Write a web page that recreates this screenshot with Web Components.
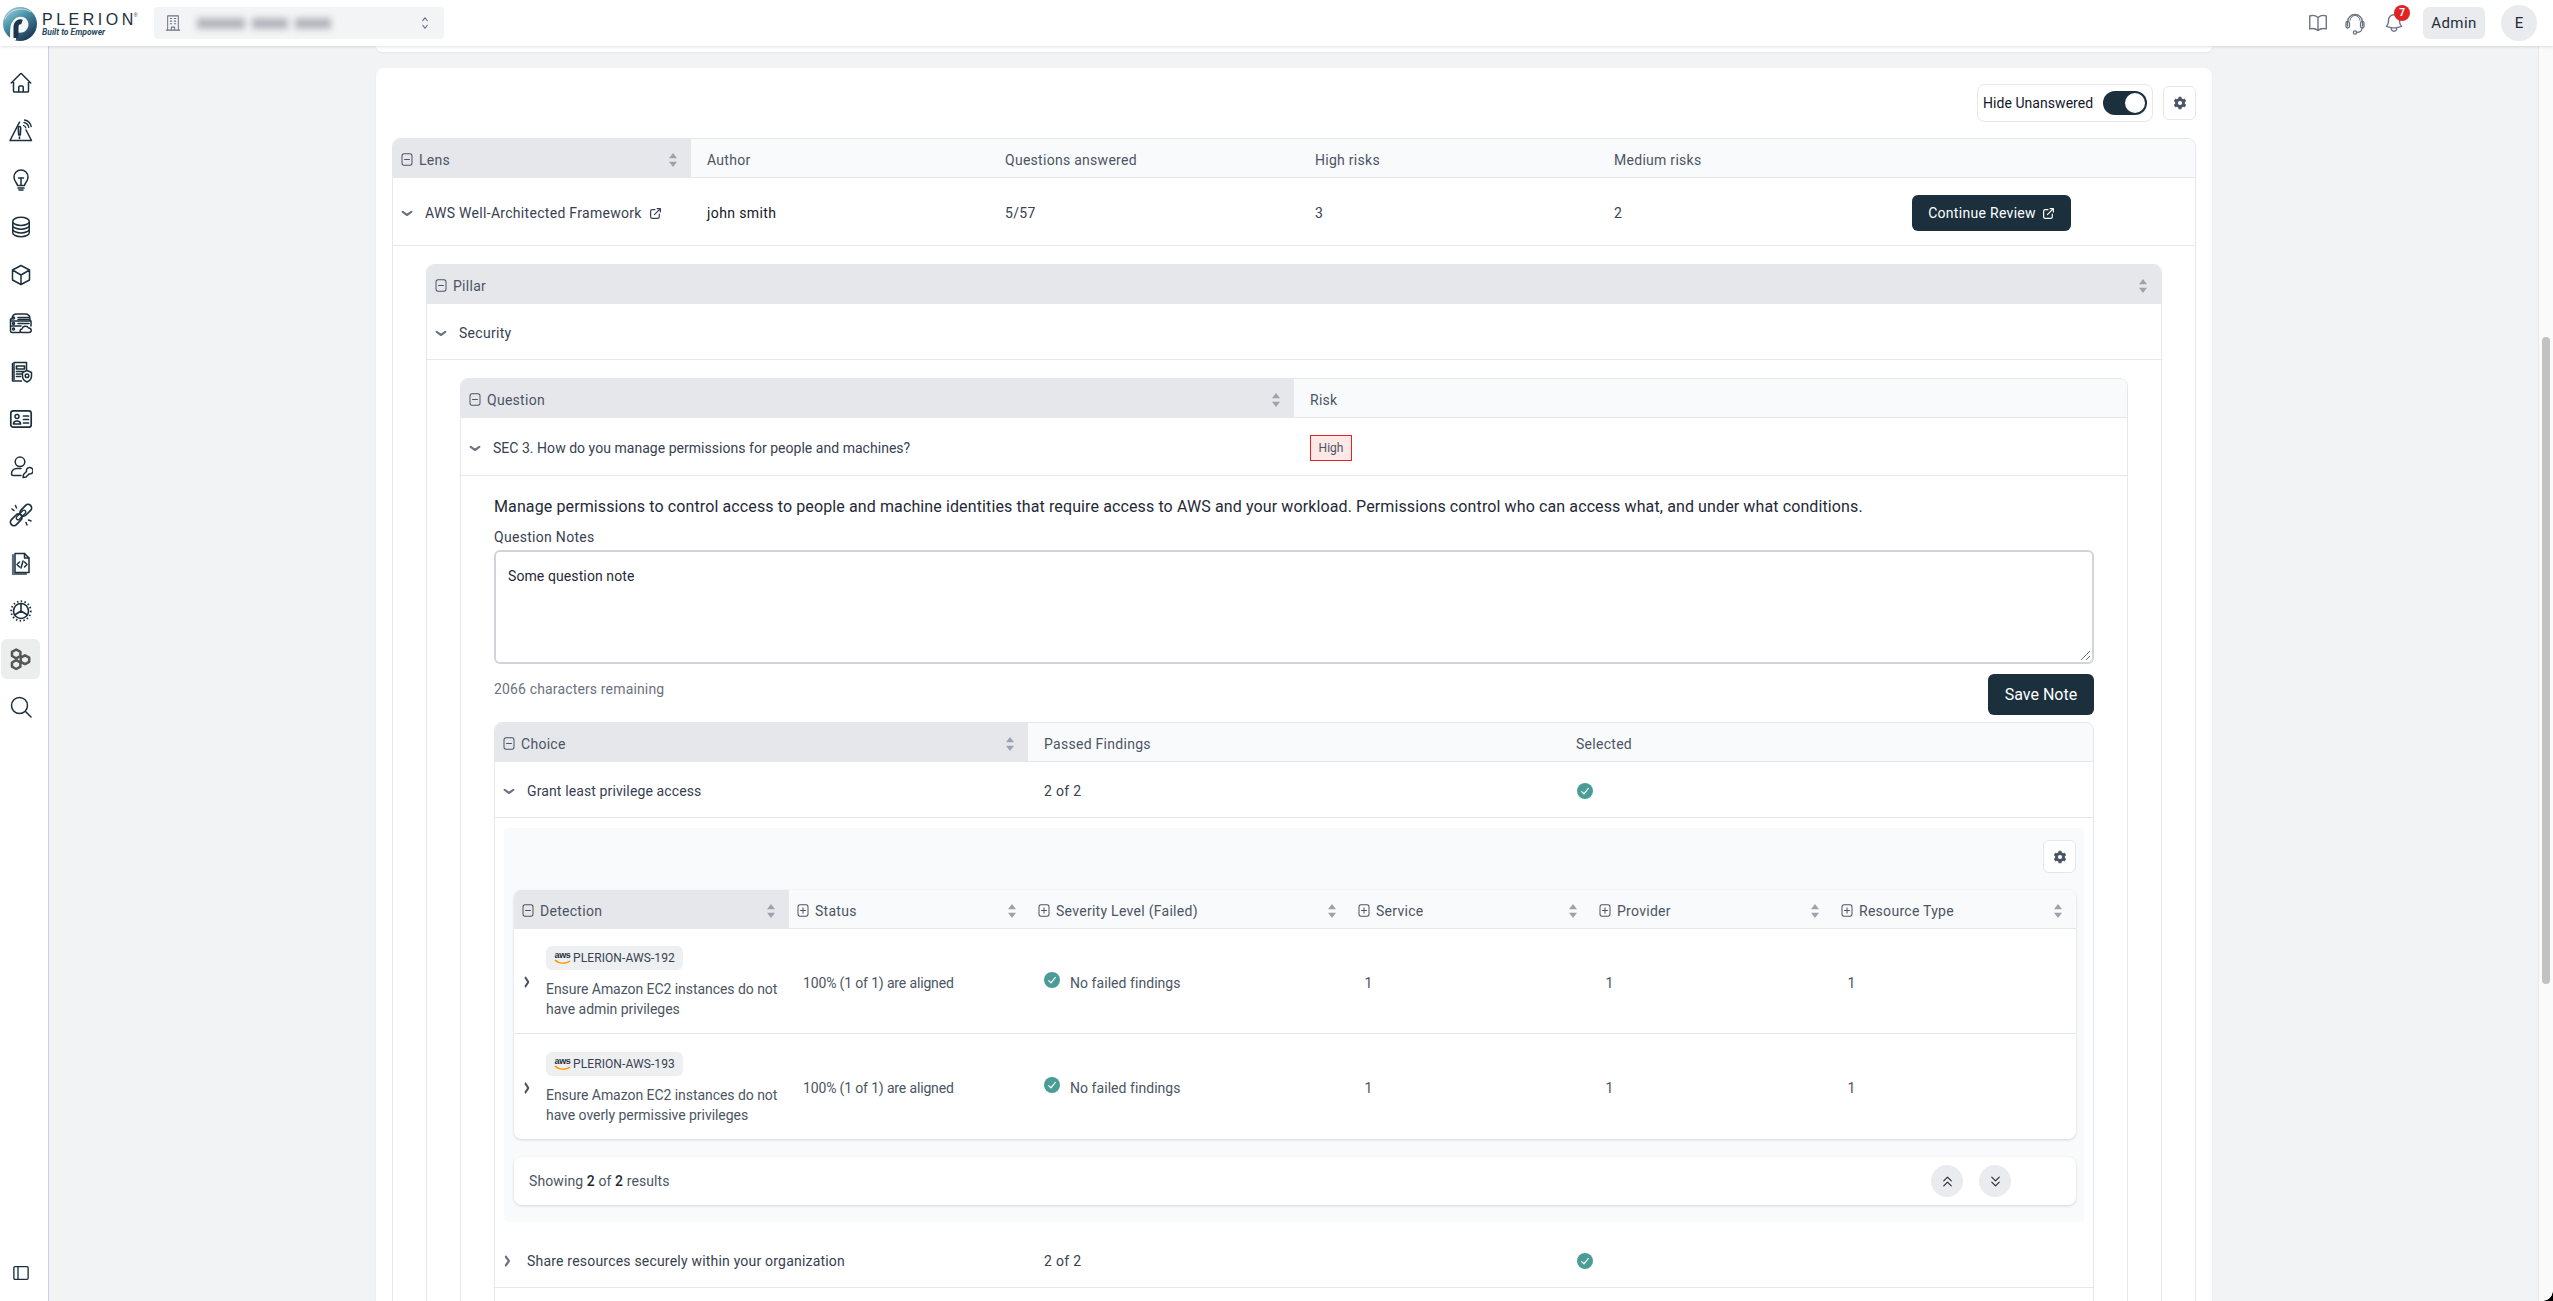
<!DOCTYPE html>
<html>
<head>
<meta charset="utf-8">
<title>Plerion</title>
<style>
  html, body { margin: 0; height: 100%; overflow: hidden; }
  body { font-family: "Roboto", "Liberation Sans", sans-serif; font-size: 14px; color: #374151; }
</style>
</head>
<body>
<app-shell>
  <top-bar slot="header"></top-bar>
  <side-nav slot="nav"></side-nav>

  <page-stub></page-stub>
  <page-card>
    <card-toolbar></card-toolbar>

    <data-table>
      <table-head cols="298px 298px 310px 299px 298px 1fr">
        <head-cell label="Lens" mode="minus" active sort></head-cell>
        <head-cell label="Author"></head-cell>
        <head-cell label="Questions answered"></head-cell>
        <head-cell label="High risks"></head-cell>
        <head-cell label="Medium risks"></head-cell>
        <head-cell></head-cell>
      </table-head>
      <table-row cols="298px 298px 310px 299px 298px 1fr">
        <row-cell chevron="down"><span>AWS Well-Architected Framework</span><ui-icon name="external" size="13" stroke="2.2" style="margin-left:7px"></ui-icon></row-cell>
        <row-cell style="--ls:.4px"><span style="color:#111827">john smith</span></row-cell>
        <row-cell>5/57</row-cell>
        <row-cell>3</row-cell>
        <row-cell>2</row-cell>
        <row-cell><dark-button>Continue Review <ui-icon name="external" size="13" stroke="2.2" style="margin-left:6px"></ui-icon></dark-button></row-cell>
      </table-row>

      <table-detail>
        <data-table>
          <table-head cols="1fr">
            <head-cell label="Pillar" mode="minus" active sort></head-cell>
          </table-head>
          <table-row cols="1fr">
            <row-cell chevron="down">Security</row-cell>
          </table-row>

          <table-detail>
            <data-table>
              <table-head cols="833px 1fr">
                <head-cell label="Question" mode="minus" active sort></head-cell>
                <head-cell label="Risk"></head-cell>
              </table-head>
              <table-row cols="833px 1fr">
                <row-cell chevron="down" style="--ls:.03px">SEC 3. How do you manage permissions for people and machines?</row-cell>
                <row-cell><risk-badge>High</risk-badge></row-cell>
              </table-row>

              <question-body>
                <span slot="intro">Manage permissions to control access to people and machine identities that require access to AWS and your workload. Permissions control who can access what, and under what conditions.</span>
                <span slot="note">Some question note</span>

                <data-table>
                  <table-head cols="533px 532px 1fr">
                    <head-cell label="Choice" mode="minus" active sort></head-cell>
                    <head-cell label="Passed Findings"></head-cell>
                    <head-cell label="Selected"></head-cell>
                  </table-head>
                  <table-row cols="533px 532px 1fr">
                    <row-cell chevron="down" style="--ls:.12px">Grant least privilege access</row-cell>
                    <row-cell>2 of 2</row-cell>
                    <row-cell><ui-icon name="check" size="16" style="color:#4a9d96;margin-left:1px"></ui-icon></row-cell>
                  </table-row>

                  <findings-panel>
                    <data-table raised>
                      <table-head cols="275px 241px 320px 241px 242px 1fr">
                        <head-cell label="Detection" mode="minus" active sort></head-cell>
                        <head-cell label="Status" mode="plus" sort></head-cell>
                        <head-cell label="Severity Level (Failed)" mode="plus" sort></head-cell>
                        <head-cell label="Service" mode="plus" sort></head-cell>
                        <head-cell label="Provider" mode="plus" sort></head-cell>
                        <head-cell label="Resource Type" mode="plus" sort></head-cell>
                      </table-head>
                      <detection-row code="PLERION-AWS-192" text="Ensure Amazon EC2 instances do not have admin privileges"></detection-row>
                      <detection-row code="PLERION-AWS-193" text="Ensure Amazon EC2 instances do not have overly permissive privileges" last></detection-row>
                    </data-table>
                    <results-bar slot="footer"></results-bar>
                  </findings-panel>

                  <table-row cols="533px 532px 1fr">
                    <row-cell chevron="right" style="--ls:.2px">Share resources securely within your organization</row-cell>
                    <row-cell>2 of 2</row-cell>
                    <row-cell><ui-icon name="check" size="16" style="color:#4a9d96;margin-left:1px"></ui-icon></row-cell>
                  </table-row>
                  <table-row cols="1fr"><row-cell></row-cell></table-row>
                </data-table>
              </question-body>
            </data-table>
          </table-detail>
        </data-table>
      </table-detail>
    </data-table>
  </page-card>
</app-shell>

<script>
const iconPaths = {
  home: `<path d="M2.25 12l8.954-8.955c.44-.439 1.152-.439 1.591 0L21.75 12M4.5 9.75v10.125c0 .621.504 1.125 1.125 1.125H9.75v-4.875c0-.621.504-1.125 1.125-1.125h2.25c.621 0 1.125.504 1.125 1.125V21h4.125c.621 0 1.125-.504 1.125-1.125V9.75M8.25 21h8.25"/>`,
  alert: `<path d="M10.5 3.2 1 21.5h21.5L17 11"/><path d="M10.5 7.5c1 0 1.2.8 1.2 1.5l-.4 7h-1.6l-.4-7c0-.7.2-1.500 1.200-1.500zM10.500 18v1.500" stroke-width="1.600"/><path d="M14.500 6.500c1 .3 2 1.200 2.300 2.300M15 3.500c2.500.5 4.200 2.200 4.800 4.800M15.500 1c3.200.6 6 3.300 6.700 6.600" stroke-width="1.300"/>`,
  bulb: `<path d="M8.500 18.500c0-2.500-3.500-3.700-3.500-8.500a7 7 0 0 1 14 0c0 4.800-3.500 6-3.500 8.500z"/><path d="M9 21h6M10 23h4M9.500 11h5M12 11v7"/>`,
  db: `<path d="M20.250 6.375c0 2.278-3.694 4.125-8.250 4.125S3.750 8.653 3.750 6.375m16.500 0c0-2.278-3.694-4.125-8.250-4.125S3.750 4.097 3.750 6.375m16.500 0v11.250c0 2.278-3.694 4.125-8.250 4.125s-8.250-1.847-8.250-4.125V6.375m16.500 0v3.750m-16.500-3.750v3.750m16.500 0v3.750C20.250 16.153 16.556 18 12 18s-8.250-1.847-8.250-4.125v-3.750m16.500 0c0 2.278-3.694 4.125-8.250 4.125s-8.250-1.847-8.250-4.125"/>`,
  cube: `<path d="M12 2.500 20.500 7v10L12 21.500 3.500 17V7zM3.500 7 12 12l8.500-5M12 12v9.500"/>`,
  server: `<path d="M3 8c0-4 2-5 5-5h8c3 0 5 1 5 5v2H1.500V8zM1.500 10H22v5M1.500 10v5H12M1.500 15v5c0 .8.500 1.500 1.500 1.500h8"/><circle cx="4.500" cy="12.500" r="1"/><circle cx="4.500" cy="18" r="1"/><circle cx="4.500" cy="7" r="1"/><path d="M9 6.500h11M9 8.500h11M9 12.500h11"/><path d="M13 21.500c-2.500 0-2.500-3.500 0-3.500 .5-3 5-4 6.500-1 3-.3 4 4.500.5 4.500z" fill="#fff"/>`,
  docshield: `<path d="M5 20.500V3.500h12.500v7"/><path d="M3.500 4.500v17.500h9"/><path d="M7.500 7h8v3h-8zM7.500 12.500h7M7.500 15h5M7.500 17.500h4" stroke-width="1.700"/><path d="M18 11.500l4.500 2v3.500c0 3-2 5-4.500 6-2.500-1-4.500-3-4.500-6v-3.500z" fill="#fff"/><circle cx="18" cy="16.800" r="1.800"/>`,
  idcard: `<rect x="1.800" y="3.800" width="20.400" height="16.400" rx="2.500" stroke-width="1.700"/><circle cx="8" cy="9.500" r="2"/><path d="M4.500 17c0-4 7-4 7 0zM14.500 9h5M14.500 12.500h5M14.500 16h5" stroke-width="1.700"/>`,
  userkey: `<circle cx="11" cy="6.800" r="4.800"/><path d="M12 13.500H8c-3.500 0-5.500 2.500-5.500 5.500 0 1 .5 1.500 1.500 1.500h8"/><path d="M14 22.500l.5-3 3-3a3.300 3.300 0 1 1 2.500 2.500l-3 3z" fill="#fff"/>`,
  chain: `<g transform="rotate(45 12 12)"><rect x="8.500" y="-1.500" width="7" height="13.500" rx="3.500" stroke-width="1.700"/><rect x="8.500" y="12" width="7" height="13.500" rx="3.500" stroke-width="1.700"/><rect x="10.200" y="6" width="3.600" height="12" rx="1.800" stroke-width="1.300"/></g><path d="M3 6 5 7.500M6.500 2.500 7.500 5M18 22l-1-2.500M22 18l-2.500-1" stroke-dasharray="1 1"/>`,
  code: `<path d="M20 7v14.500H6V2.500h9.500z" stroke-dasharray="none"/><path d="M4 4v19h13" stroke-width="2.200" opacity=".7"/><path d="M15.500 2.500V7H20"/><path d="M10.500 11 8 13.500l2.500 2.500M15.500 11 18 13.500 15.500 16M14 10l-2 7"/>`,
  wheel: `<circle cx="12" cy="12" r="7.500" stroke-width="1.600"/><path d="M12 12V4.500M12 12l-6.500 4M12 12l6.500 4" stroke-width="1.600"/><circle cx="12" cy="12" r="9.800" stroke-width="1.800" stroke-dasharray="1.500 2.300" stroke-linecap="butt"/>`,
  hexes: `<path d="M8.700 2 12.900 4.300V8.500L8.700 10.800 4.500 8.500V4.300z M17.500 7.800l4.200 2.300v4.200l-4.200 2.300-4.200-2.300v-4.200z M8.700 12.700l4.200 2.300v4.200l-4.200 2.300-4.200-2.300V15z" transform="translate(-1.500 .5)" stroke-width="2.500" stroke="#555"/>`,
  search: `<circle cx="10.500" cy="10.500" r="8"/><path d="M16.500 16.500 22 22"/>`,
  panel: `<rect x="2.500" y="3.500" width="19" height="17" rx="1.500" stroke-width="1.800"/><path d="M8 3.500v17" stroke-width="1.800"/>`,
  book: `<path d="M12 6.042A8.967 8.967 0 006 3.750c-1.052 0-2.062.18-3 .512v14.250A8.987 8.987 0 016 18c2.305 0 4.408.867 6 2.292m0-14.250a8.966 8.966 0 016-2.292c1.052 0 2.062.18 3 .512v14.250A8.987 8.987 0 0018 18a8.967 8.967 0 00-6 2.292m0-14.250v14.250"/>`,
  headset: `<path d="M4.500 15V11a7.500 7.500 0 0 1 15 0v4"/><path d="M7 9.500a5 5 0 0 1 10 0" stroke-width="1"/><rect x="3" y="10.500" width="3.500" height="6.500" rx="1.700"/><rect x="17.500" y="10.500" width="3.500" height="6.500" rx="1.700"/><path d="M19 17c0 3-2.500 4.500-5.500 4.500"/><circle cx="12" cy="21.500" r="1.600"/>`,
  bell: `<path d="M14.857 17.082a23.848 23.848 0 005.454-1.310A8.967 8.967 0 0118 9.750v-.7V9A6 6 0 006 9v.750a8.967 8.967 0 01-2.312 6.022c1.733.64 3.560 1.085 5.455 1.310m5.714 0a24.255 24.255 0 01-5.714 0m5.714 0a3 3 0 11-5.714 0"/>`,
  building: `<path d="M4 21.500V2.500h16v19M2 21.500h20M9.500 21.500v-4h5v4M8 6h2M14 6h2M8 9.500h2M14 9.500h2M8 13h2M14 13h2"/>`,
  updown: `<path d="M8 9l4-4 4 4M8 15l4 4 4-4"/>`,
  external: `<path d="M11 5H6a3 3 0 0 0-3 3v10a3 3 0 0 0 3 3h10a3 3 0 0 0 3-3v-5M10 14 21 3m0 0h-6M21 3v6"/>`,
  down: `<path d="M3.500 7.500 12 16l8.500-8.500"/>`,
  right: `<path d="M7.500 3.500 16 12l-8.500 8.500"/>`,
  minus: `<rect x="2" y="1.500" width="20" height="21" rx="4"/><path d="M7 12h10"/>`,
  plus: `<rect x="2" y="1.500" width="20" height="21" rx="4"/><path d="M7 12h10M12 7v10"/>`,
  chevsup: `<path d="M6 11l6-6 6 6M6 19l6-6 6 6"/>`,
  chevsdown: `<path d="M6 5l6 6 6-6M6 13l6 6 6-6"/>`
};
const filledIcons = {
  gear: `<path fill="currentColor" fill-rule="evenodd" clip-rule="evenodd" d="M7.84 1.804A1 1 0 018.82 1h2.36a1 1 0 01.98.804l.331 1.652a6.993 6.993 0 011.929 1.115l1.598-.54a1 1 0 011.186.447l1.18 2.044a1 1 0 01-.205 1.251l-1.267 1.113a7.047 7.047 0 010 2.228l1.267 1.113a1 1 0 01.206 1.25l-1.18 2.045a1 1 0 01-1.187.447l-1.598-.54a6.993 6.993 0 01-1.929 1.115l-.33 1.652a1 1 0 01-.98.804H8.82a1 1 0 01-.98-.804l-.331-1.652a6.993 6.993 0 01-1.929-1.115l-1.598.54a1 1 0 01-1.186-.447l-1.18-2.044a1 1 0 01.205-1.251l1.267-1.114a7.05 7.05 0 010-2.227L1.821 7.773a1 1 0 01-.206-1.250l1.180-2.045a1 1 0 011.187-.447l1.598.54A6.993 6.993 0 017.510 3.456l.33-1.652zM10 13a3 3 0 100-6 3 3 0 000 6z"/>`,
  check: `<circle cx="10" cy="10" r="10" fill="currentColor"/><path d="M5.500 10.500 8.700 13.500 14.500 6.500" fill="none" stroke="#fff" stroke-width="1.500"/>`,
  sort: `<path fill="currentColor" d="M4 0 8 6H0zM4 16 0 10h8z"/>`
};

class uiIcon extends HTMLElement {
  constructor() {
    super();
    this.attachShadow({ mode: "open" });
  }
  connectedCallback() {
    const name = this.getAttribute("name");
    const size = this.getAttribute("size") || 24;
    const h = this.getAttribute("height") || size;
    const body = filledIcons[name]
      ? `<svg width="${size}" height="${h}" viewBox="0 0 ${name === "sort" ? "8 16" : "20 20"}" preserveAspectRatio="none">${filledIcons[name]}</svg>`
      : `<svg width="${size}" height="${h}" viewBox="0 0 24 24" fill="none" stroke="currentColor" stroke-width="${this.getAttribute("stroke") || 1.5}" stroke-linecap="round" stroke-linejoin="round" preserveAspectRatio="none">${iconPaths[name]}</svg>`;
    this.shadowRoot.innerHTML = `<style>:host{display:inline-flex;flex:none;line-height:0}</style>${body}`;
  }
}
customElements.define("ui-icon", uiIcon);

class appShell extends HTMLElement {
  constructor() {
    super();
    this.attachShadow({ mode: "open" }).innerHTML = `
      <style>
        :host{display:grid;grid-template-columns:49px 1fr 15px;grid-template-rows:46px 1fr;height:1301px;width:2553px;background:#f2f3f5;overflow:hidden;position:relative}
        .head{grid-column:1 / 4;z-index:2}
        .main{padding:0 326px 0 327px;overflow:hidden}
        .track{background:#fafafa;border-left:1px solid #e8e8e8;padding:291px 3px 0 3px}
        .thumb{height:647px;border-radius:4px;background:#c2c2c2}
        .corner{position:absolute;right:0;bottom:0;width:10px;height:10px;background:radial-gradient(circle at 0 0,transparent 9.500px,#000 10px)}
      </style>
      <div class="head"><slot name="header"></slot></div>
      <slot name="nav"></slot>
      <div class="main"><slot></slot></div>
      <div class="track"><div class="thumb"></div></div>
      <div class="corner"></div>`;
  }
}
customElements.define("app-shell", appShell);

class topBar extends HTMLElement {
  constructor() {
    super();
    this.attachShadow({ mode: "open" }).innerHTML = `
      <style>
        :host{display:flex;align-items:center;height:46px;background:#fff;box-shadow:0 1px 3px rgba(0,0,0,.12);padding:0 16px 0 3px;box-sizing:border-box}
        .logo{display:flex;align-items:center;width:151px;flex:none;padding-top:2px}
        .brand{display:flex;flex-direction:column;margin-left:5px;color:#1b2f3d}
        .name{font:400 16px/15px "Liberation Sans",sans-serif;letter-spacing:3.500px;white-space:nowrap}
        .name sup{font-size:5px;letter-spacing:0;vertical-align:8px;line-height:0;margin-left:-3px}
        .tag{font:italic 700 8.500px/9px "Roboto",sans-serif;margin-top:1px;color:#2a4a5e}
        .org{display:flex;align-items:center;width:290px;height:32px;background:#f3f4f6;border-radius:4px;padding:0 12px 0 11px;box-sizing:border-box;color:#6b7280}
        .blur{display:flex;gap:7px;margin-left:16px;flex:1;filter:blur(3px)}
        .blur i{display:block;height:11px;background:#b4b6bc}
        .right{margin-left:auto;display:flex;align-items:center;color:#6b7280}
        .bell{position:relative;display:flex;margin-left:16px}
        .badge{position:absolute;left:11px;top:-7px;width:16px;height:16px;border-radius:50%;background:#e02424;color:#fff;font:700 10px/16px "Roboto",sans-serif;text-align:center}
        .admin{margin-left:18px;width:62px;height:32px;border-radius:6px;background:#e9ebee;color:#1f2f3d;font-size:15px;letter-spacing:.4px;line-height:32px;text-align:center}
        .avatar{margin-left:16px;width:36px;height:36px;border-radius:50%;background:#e9ebee;color:#1f2937;font-size:15px;line-height:36px;text-align:center}
      </style>
      <div class="logo">
        <svg width="34" height="34" viewBox="0 0 34 34">
          <defs><linearGradient id="g" x1="0" y1="0" x2=".7" y2="1"><stop offset="0" stop-color="#b5dbe2"/><stop offset=".45" stop-color="#4a93aa"/><stop offset="1" stop-color="#1c3550"/></linearGradient></defs>
          <circle cx="17" cy="17" r="17" fill="url(#g)"/>
          <path d="M7 33C7 22 7 18 10 14c3-5 11-6 14-1 3 4 1 10-3 12-3 1-6 1-8 0v8z" fill="#fff" opacity=".95"/>
          <path d="M13 31V20c0-4 3-6 6-5" fill="none" stroke="#1c3550" stroke-width="5"/>
          <path d="M2 12C6 3 18-1 28 5" fill="none" stroke="#e8f4f6" stroke-width="1" opacity=".7"/>
        </svg>
        <div class="brand">
          <span class="name">PLERION<sup>®</sup></span>
          <span class="tag">Built to Empower</span>
        </div>
      </div>
      <div class="org">
        <ui-icon name="building" size="16" height="18"></ui-icon>
        <div class="blur"><i style="width:48px"></i><i style="width:36px"></i><i style="width:36px"></i></div>
        <ui-icon name="updown" size="14" height="18" style="color:#6b7280"></ui-icon>
      </div>
      <div class="right">
        <ui-icon name="book" size="22"></ui-icon>
        <ui-icon name="headset" size="24" stroke="1.3" style="margin-left:14px"></ui-icon>
        <div class="bell"><ui-icon name="bell" size="22"></ui-icon><span class="badge">7</span></div>
        <div class="admin">Admin</div>
        <div class="avatar">E</div>
      </div>`;
  }
}
customElements.define("top-bar", topBar);

class sideNav extends HTMLElement {
  constructor() {
    super();
    const items = ["home", "alert", "bulb", "db", "cube", "server", "docshield", "idcard", "userkey", "chain", "code", "wheel", "hexes", "search"];
    this.attachShadow({ mode: "open" }).innerHTML = `
      <style>
        :host{display:flex;flex-direction:column;background:#fff;border-right:1px solid #cbd0dc;padding-top:17px;box-sizing:border-box;color:#1b2f3d;width:49px}
        .item{height:40px;width:39px;margin:0 0 8px 1px;border-radius:6px;display:flex;align-items:center;justify-content:center}
        .item.on{background:#eceded}
        .foot{margin-top:auto;padding:0 0 19px 12px;line-height:0}
      </style>
      ${items.map(n => `<div class="item ${n === "hexes" ? "on" : ""}"><ui-icon name="${n}" size="24"></ui-icon></div>`).join("")}
      <div class="foot"><ui-icon name="panel" size="18"></ui-icon></div>`;
  }
}
customElements.define("side-nav", sideNav);

class pageStub extends HTMLElement {
  constructor() {
    super();
    this.attachShadow({ mode: "open" }).innerHTML = `<style>:host{display:block;height:6px;margin-bottom:16px;background:#fff;border-radius:0 0 8px 8px;box-shadow:0 1px 2px rgba(0,0,0,.05)}</style>`;
  }
}
customElements.define("page-stub", pageStub);

class pageCard extends HTMLElement {
  constructor() {
    super();
    this.attachShadow({ mode: "open" }).innerHTML = `<style>:host{display:block;background:#fff;border-radius:8px 8px 0 0;padding:16px 16px 0;height:1400px;box-sizing:border-box;box-shadow:0 1px 2px rgba(0,0,0,.05)}</style><slot></slot>`;
  }
}
customElements.define("page-card", pageCard);

class cardToolbar extends HTMLElement {
  constructor() {
    super();
    this.attachShadow({ mode: "open" }).innerHTML = `
      <style>
        :host{display:flex;justify-content:flex-end;align-items:center;gap:10px;height:38px;margin-bottom:16px}
        .toggle{display:flex;align-items:center;justify-content:space-between;width:176px;height:38px;box-sizing:border-box;border:1px solid #e5e7eb;border-radius:8px;padding:0 5px;color:#111827;font-size:14px;letter-spacing:.05px}
        .switch{width:44px;height:24px;border-radius:12px;background:#1b2f3d;position:relative}
        .switch::after{content:"";position:absolute;right:2px;top:2px;width:20px;height:20px;border-radius:50%;background:#fff}
        .gear{width:33px;height:34px;box-sizing:border-box;border:1px solid #e5e7eb;border-radius:6px;display:flex;align-items:center;justify-content:center;color:#4b5563}
      </style>
      <div class="toggle"><span>Hide Unanswered</span><div class="switch"></div></div>
      <div class="gear"><ui-icon name="gear" size="14"></ui-icon></div>`;
  }
}
customElements.define("card-toolbar", cardToolbar);

class dataTable extends HTMLElement {
  constructor() {
    super();
    this.attachShadow({ mode: "open" }).innerHTML = `
      <style>
        :host{display:block;border:1px solid #e5e7eb;border-radius:8px 8px 0 0;overflow:hidden;background:#fff}
        :host([raised]){border:0;border-radius:8px;overflow:hidden;box-shadow:0 1px 3px rgba(0,0,0,.15)}
      </style>
      <slot></slot>`;
  }
}
customElements.define("data-table", dataTable);

class tableHead extends HTMLElement {
  constructor() {
    super();
    this.attachShadow({ mode: "open" }).innerHTML = `<style>:host{display:grid;height:39px;background:#f9fafb;border-bottom:1px solid #e5e7eb;box-sizing:border-box}</style><slot></slot>`;
  }
  connectedCallback() {
    this.style.gridTemplateColumns = this.getAttribute("cols");
  }
}
customElements.define("table-head", tableHead);

class headCell extends HTMLElement {
  constructor() {
    super();
    this.attachShadow({ mode: "open" });
  }
  connectedCallback() {
    const label = this.getAttribute("label") || "";
    const mode = this.getAttribute("mode");
    const sort = this.hasAttribute("sort");
    this.shadowRoot.innerHTML = `
      <style>
        :host{display:flex;align-items:center;box-sizing:border-box;padding:2px 14px 0 ${mode ? 8 : 16}px;color:#4b5563;font-size:14px;letter-spacing:.28px;height:39px;margin-bottom:-1px}
        :host([active]){background:#e5e7eb}
        .t{margin-left:${mode ? 6 : 0}px;flex:1;white-space:nowrap}
        ui-icon.s{color:#9ca3af}
      </style>
      ${mode ? `<ui-icon name="${mode}" size="12" height="13" stroke="2"></ui-icon>` : ""}
      <span class="t">${label}</span>
      ${sort ? `<ui-icon class="s" name="sort" size="8" height="14"></ui-icon>` : ""}`;
  }
}
customElements.define("head-cell", headCell);

class tableRow extends HTMLElement {
  constructor() {
    super();
    this.attachShadow({ mode: "open" }).innerHTML = `<style>:host{display:grid;align-items:center;padding:17px 0 14px;border-bottom:1px solid #e5e7eb}</style><slot></slot>`;
  }
  connectedCallback() {
    this.style.gridTemplateColumns = this.getAttribute("cols");
  }
}
customElements.define("table-row", tableRow);

class rowCell extends HTMLElement {
  constructor() {
    super();
    this.attachShadow({ mode: "open" });
  }
  connectedCallback() {
    const chevron = this.getAttribute("chevron");
    this.shadowRoot.innerHTML = `
      <style>
        :host{display:flex;align-items:center;min-height:24px;padding-left:${chevron ? 8 : 16}px;font-size:14px;letter-spacing:var(--ls,.3px);color:#374151;white-space:nowrap}
        .c{color:#6b7280;margin-right:${chevron === "right" ? 15 : 12}px}
      </style>
      ${chevron ? `<ui-icon class="c" name="${chevron}" size="${chevron === "right" ? 9 : 12}" height="${chevron === "right" ? 12 : 9}" stroke="5"></ui-icon>` : ""}
      <slot></slot>`;
  }
}
customElements.define("row-cell", rowCell);

class tableDetail extends HTMLElement {
  constructor() {
    super();
    this.attachShadow({ mode: "open" }).innerHTML = `<style>:host{display:block;padding:18px 33px 0}</style><slot></slot>`;
  }
}
customElements.define("table-detail", tableDetail);

class darkButton extends HTMLElement {
  constructor() {
    super();
    this.attachShadow({ mode: "open" }).innerHTML = `<style>:host{display:inline-flex;align-items:center;justify-content:center;width:159px;height:36px;border-radius:6px;background:#1b2f3d;color:#fff;font-size:14px}</style><slot></slot>`;
  }
}
customElements.define("dark-button", darkButton);

class riskBadge extends HTMLElement {
  constructor() {
    super();
    this.attachShadow({ mode: "open" }).innerHTML = `<style>:host{display:inline-flex;align-items:center;justify-content:center;width:42px;height:26px;box-sizing:border-box;border:1px solid #e02424;background:#fde8e8;color:#4b5563;font-size:12px;letter-spacing:0}</style><slot></slot>`;
  }
}
customElements.define("risk-badge", riskBadge);

class questionBody extends HTMLElement {
  constructor() {
    super();
    this.attachShadow({ mode: "open" }).innerHTML = `
      <style>
        :host{display:block;padding:19px 33px 0}
        .intro{font-size:16px;line-height:24px;color:#1f2937;white-space:nowrap;letter-spacing:.115px}
        .label{font-size:14px;line-height:20px;margin-top:8px;color:#374151;letter-spacing:.3px}
        .area{position:relative;height:114px;margin-top:3px;border:2px solid #d1d5db;border-radius:6px;padding:14px 12px;box-sizing:border-box;font-size:14px;line-height:20px;color:#1f2937;letter-spacing:.1px}
        .grip{position:absolute;right:1px;bottom:1px}
        .row{display:flex;justify-content:space-between;align-items:flex-start;margin:10px 0 7px}
        .left{font-size:14px;line-height:20px;color:#6b7280;padding-top:5px;letter-spacing:.15px}
        .save{width:106px;height:41px;border-radius:6px;background:#1b2f3d;color:#fff;font-size:16px;line-height:41px;text-align:center}
      </style>
      <div class="intro"><slot name="intro"></slot></div>
      <div class="label">Question Notes</div>
      <div class="area"><slot name="note"></slot>
        <svg class="grip" width="12" height="12" viewBox="0 0 12 12" fill="none" stroke="#6b7280"><path d="M2 11 11 2M7 11 11 7"/></svg>
      </div>
      <div class="row"><span class="left">2066 characters remaining</span><div class="save">Save Note</div></div>
      <slot></slot>`;
  }
}
customElements.define("question-body", questionBody);

class findingsPanel extends HTMLElement {
  constructor() {
    super();
    this.attachShadow({ mode: "open" }).innerHTML = `
      <style>
        :host{display:block;margin:10px 9px;background:#f9fafb;border-radius:4px;padding:12px 8px 17px 10px}
        .gear{margin-left:auto;margin-bottom:17px;width:33px;height:33px;box-sizing:border-box;background:#fff;border:1px solid #e5e7eb;border-radius:6px;display:flex;align-items:center;justify-content:center;color:#4b5563}
        .foot{margin-top:18px}
      </style>
      <div class="gear"><ui-icon name="gear" size="14"></ui-icon></div>
      <slot></slot>
      <div class="foot"><slot name="footer"></slot></div>`;
  }
}
customElements.define("findings-panel", findingsPanel);

class detectionRow extends HTMLElement {
  constructor() {
    super();
    this.attachShadow({ mode: "open" });
  }
  connectedCallback() {
    this.shadowRoot.innerHTML = `
      <style>
        :host{display:grid;grid-template-columns:275px 241px 320px 241px 242px 1fr;align-items:center;height:105px;box-sizing:border-box;border-bottom:1px solid #e5e7eb;color:#4b5563;font-size:14px;letter-spacing:.05px}
        :host([last]){border-bottom:0}
        .first{display:flex;align-items:center;padding:2px 0 0 9px}
        .chev{color:#4b5563;margin-right:15px}
        .chip{display:inline-flex;align-items:center;height:24px;width:137px;box-sizing:border-box;padding-left:8px;background:#eeeff1;border-radius:6px;font-size:12px;letter-spacing:.1px;color:#374151}
        .aws{position:relative;display:inline-block;width:17px;height:14px;margin-right:2px;font:700 9px/9px "Liberation Sans",sans-serif;letter-spacing:-.3px;color:#252f3e;text-align:center}
        .aws svg{position:absolute;left:0;top:8px}
        .desc{margin-top:9px;line-height:20px;width:236px;letter-spacing:-.05px}
        .v{padding:3px 0 0 14.500px}
        .s{letter-spacing:-.15px;padding-left:14px}
        .sev{display:flex;align-items:center;gap:10px;padding-left:14px}
        .sev ui-icon{color:#4a9d96;margin-top:-6px}
      </style>
      <div class="first">
        <ui-icon class="chev" name="right" size="8" height="12" stroke="5"></ui-icon>
        <div><div class="chip"><span class="aws">aws<svg width="17" height="6" viewBox="0 0 17 6" fill="none" stroke="#f90" stroke-width="1.500"><path d="M1 1c4 4 11 4 15 1"/></svg></span>${this.getAttribute("code")}</div>
        <div class="desc">${this.getAttribute("text")}</div></div>
      </div>
      <div class="v s">100% (1 of 1) are aligned</div>
      <div class="v sev"><ui-icon name="check" size="16"></ui-icon>No failed findings</div>
      <div class="v">1</div>
      <div class="v">1</div>
      <div class="v">1</div>`;
  }
}
customElements.define("detection-row", detectionRow);

class resultsBar extends HTMLElement {
  constructor() {
    super();
    this.attachShadow({ mode: "open" }).innerHTML = `
      <style>
        :host{display:flex;align-items:center;height:48px;box-sizing:border-box;background:#fff;border-radius:8px;box-shadow:0 1px 3px rgba(0,0,0,.15);padding:0 65px 0 15px;color:#4b5563;font-size:14px;letter-spacing:.1px}
        b{font-weight:500;color:#1f2937}
        .btns{margin-left:auto;display:flex;gap:16px}
        .r{width:32px;height:32px;border-radius:50%;background:#e9ebee;display:flex;align-items:center;justify-content:center;color:#1f2937}
      </style>
      <span>Showing <b>2</b> of <b>2</b> results</span>
      <div class="btns">
        <div class="r"><ui-icon name="chevsup" size="15" stroke="1.800"></ui-icon></div>
        <div class="r"><ui-icon name="chevsdown" size="15" stroke="1.800"></ui-icon></div>
      </div>`;
  }
}
customElements.define("results-bar", resultsBar);
</script>
</body>
</html>
